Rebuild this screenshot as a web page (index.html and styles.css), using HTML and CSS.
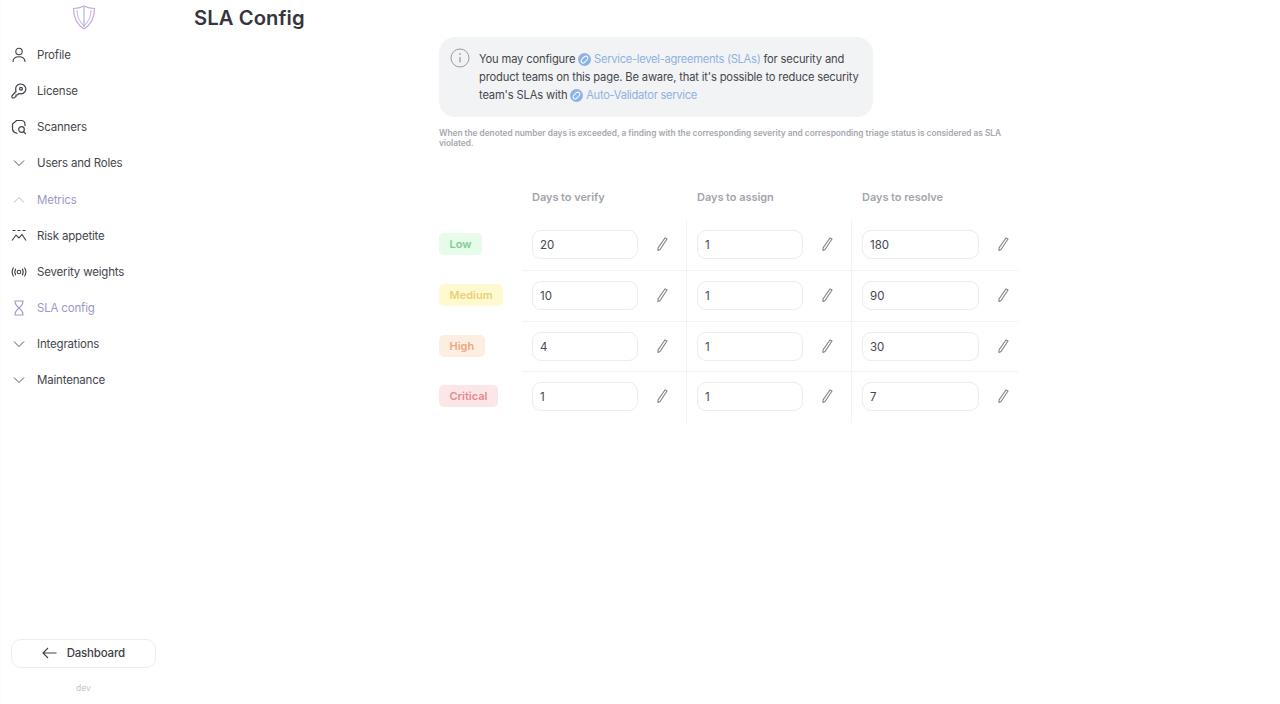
FILE: index.html
```html
<!DOCTYPE html>
<html lang="en">
<head>
<meta charset="utf-8">
<title>SLA Config</title>
<link rel="stylesheet" href="styles.css">
</head>
<body>
<div class="app">
  <aside class="sidebar">
    <div class="logo">
      <svg width="24" height="26" viewBox="0 0 24 26" fill="none" stroke="#b9a8dc" stroke-width="1.2"><path d="M12 2 C8 4 5 4.500 1.500 4.500 C1.500 13 4 20 12 25 C20 20 22.500 13 22.500 4.500 C19 4.500 16 4 12 2Z" stroke="#c4a9de"/><path d="M5 6 C5 13 7.500 18 12 22 C16.500 18 19 13 19 6" stroke="#cfc6e6"/><path d="M12 3 V23" stroke="#a9b8d8"/></svg>
    </div>
    <nav class="nav">
      <a class="nav-item"><svg class="ico" viewBox="0 0 16 16" fill="none" stroke="#3f4048" stroke-width="1.100"><circle cx="8" cy="4.500" r="3.200"/><path d="M2 15 C2 11.500 4.500 9.800 8 9.800 C11.500 9.800 14 11.500 14 15"/></svg><span>Profile</span></a>
      <a class="nav-item"><svg class="ico" viewBox="0 0 16 16" fill="none" stroke="#3f4048" stroke-width="1.200"><path d="M5.500 3 C7 1 10 .6 12.300 1.800 C14.800 3.300 15.500 6.300 14 8.700 C12.500 10.800 10 11.300 8 10.500 L6.500 12 L5 12 L5 13.500 L3 15 L1.500 15 C.8 14.500 .8 13.500 1 12.800 L5 8.500 C4.500 6.500 4.600 4.500 5.500 3Z"/><circle cx="10" cy="5.800" r="1.400"/></svg><span>License</span></a>
      <a class="nav-item"><svg class="ico" viewBox="0 0 16 16" fill="none" stroke="#3f4048" stroke-width="1.200"><path d="M6.500 14.500 C4 14 1.500 12.500 1.500 9.500 L1.500 5 L5.500 1.500 L10 1.500 C12.500 1.500 14 3 14 5.500 L14 7"/><circle cx="10.500" cy="10.500" r="2.800"/><path d="M12.500 12.700 L14.800 15"/></svg><span>Scanners</span></a>
      <a class="nav-item"><svg class="ico" viewBox="0 0 16 16" fill="none" stroke="#55565e" stroke-width="1"><path d="M3 5.500 L8 10.500 L13 5.500"/></svg><span>Users and Roles</span></a>
      <a class="nav-item is-active"><svg class="ico" viewBox="0 0 16 16" fill="none" stroke="#b6b9c6" stroke-width="1"><path d="M3 10.500 L8 5.500 L13 10.500"/></svg><span>Metrics</span></a>
      <a class="nav-item"><svg class="ico" viewBox="0 0 16 16" fill="none" stroke="#3f4048" stroke-width="1.100"><path d="M1.500 2.500 H4.500 M6.500 2.500 H9.500 M11.500 2.500 H14.500"/><path d="M1 12.500 L5 7 L8 10 L11 6.500 L15 12.500"/></svg><span>Risk appetite</span></a>
      <a class="nav-item"><svg class="ico" viewBox="0 0 16 16" fill="none" stroke="#3f4048" stroke-width="1.100"><path d="M2.500 3.500 C.8 6.300 .8 9.700 2.500 12.500"/><path d="M4.700 4.800 C3.600 6.800 3.600 9.200 4.700 11.200"/><path d="M13.500 3.500 C15.200 6.300 15.200 9.700 13.500 12.500"/><path d="M11.300 4.800 C12.400 6.800 12.400 9.200 11.300 11.200"/><circle cx="8" cy="8" r="1.800"/></svg><span>Severity weights</span></a>
      <a class="nav-item is-active"><svg class="ico" viewBox="0 0 16 16" fill="none" stroke="#9d97c9" stroke-width="1.100"><path d="M4 1 H12 C12 5 10 6.500 8 8 C10 9.500 12 11 12 15 H4 C4 11 6 9.500 8 8 C6 6.500 4 5 4 1Z"/></svg><span>SLA config</span></a>
      <a class="nav-item"><svg class="ico" viewBox="0 0 16 16" fill="none" stroke="#55565e" stroke-width="1"><path d="M3 5.500 L8 10.500 L13 5.500"/></svg><span>Integrations</span></a>
      <a class="nav-item"><svg class="ico" viewBox="0 0 16 16" fill="none" stroke="#55565e" stroke-width="1"><path d="M3 5.500 L8 10.500 L13 5.500"/></svg><span>Maintenance</span></a>
    </nav>
    <div class="side-foot">
      <a class="dash-btn"><svg width="15" height="12" viewBox="0 0 15 12" fill="none" stroke="#3f4048" stroke-width="1.100"><path d="M14.500 6 H1 M6 1 L1 6 L6 11"/></svg><span>Dashboard</span></a>
      <div class="env">dev</div>
    </div>
  </aside>
  <main class="main">
    <h1 class="title">SLA Config</h1>
    <section class="content">
      <div class="notice">
        <svg class="notice-ico" width="20" height="20" viewBox="0 0 20 20" fill="none" stroke="#9a9ca6" stroke-width="1"><circle cx="10" cy="10" r="9"/><path d="M10 9 V14.500" stroke-width="1.300"/><circle cx="10" cy="6" r=".5"/></svg>
        <p class="notice-text">You may configure <a class="link"><svg class="link-ico" width="13" height="13" viewBox="0 0 13 13"><circle cx="6.500" cy="6.500" r="6.500" fill="#8db2e6"/><g transform="rotate(-45 6.500 6.500)" fill="none" stroke="#fff" stroke-width="1"><path d="M6 4.500 H4.500 a2 2 0 0 0 0 4 H7"/><path d="M7 8.500 H8.500 a2 2 0 0 0 0 -4 H6"/></g></svg> Service-level-agreements (SLAs)</a> for security and product teams on this page. Be aware, that it's possible to reduce security team's SLAs with <a class="link"><svg class="link-ico" width="13" height="13" viewBox="0 0 13 13"><circle cx="6.500" cy="6.500" r="6.500" fill="#8db2e6"/><g transform="rotate(-45 6.500 6.500)" fill="none" stroke="#fff" stroke-width="1"><path d="M6 4.500 H4.500 a2 2 0 0 0 0 4 H7"/><path d="M7 8.500 H8.500 a2 2 0 0 0 0 -4 H6"/></g></svg> Auto-Validator service</a></p>
      </div>
      <p class="hint">When the denoted number days is exceeded, a finding with the corresponding severity and corresponding triage status is considered as SLA violated.</p>
      <div class="sla-grid">
        <div class="head"></div>
        <div class="head">Days to verify</div>
        <div class="head">Days to assign</div>
        <div class="head">Days to resolve</div>

        <div class="label"><span class="badge low">Low</span></div>
        <div class="cell"><div class="field">20</div><svg class="pen" viewBox="0 0 12 14" fill="none" stroke="#85868d" stroke-width="1.100"><path d="M9 1 L11 2 L4 12.500 L2 13.500 L2 11Z"/></svg></div>
        <div class="cell"><div class="field">1</div><svg class="pen" viewBox="0 0 12 14" fill="none" stroke="#85868d" stroke-width="1.100"><path d="M9 1 L11 2 L4 12.500 L2 13.500 L2 11Z"/></svg></div>
        <div class="cell wide"><div class="field">180</div><svg class="pen" viewBox="0 0 12 14" fill="none" stroke="#85868d" stroke-width="1.100"><path d="M9 1 L11 2 L4 12.500 L2 13.500 L2 11Z"/></svg></div>

        <div class="label"><span class="badge medium">Medium</span></div>
        <div class="cell"><div class="field">10</div><svg class="pen" viewBox="0 0 12 14" fill="none" stroke="#85868d" stroke-width="1.100"><path d="M9 1 L11 2 L4 12.500 L2 13.500 L2 11Z"/></svg></div>
        <div class="cell"><div class="field">1</div><svg class="pen" viewBox="0 0 12 14" fill="none" stroke="#85868d" stroke-width="1.100"><path d="M9 1 L11 2 L4 12.500 L2 13.500 L2 11Z"/></svg></div>
        <div class="cell wide"><div class="field">90</div><svg class="pen" viewBox="0 0 12 14" fill="none" stroke="#85868d" stroke-width="1.100"><path d="M9 1 L11 2 L4 12.500 L2 13.500 L2 11Z"/></svg></div>

        <div class="label"><span class="badge high">High</span></div>
        <div class="cell"><div class="field">4</div><svg class="pen" viewBox="0 0 12 14" fill="none" stroke="#85868d" stroke-width="1.100"><path d="M9 1 L11 2 L4 12.500 L2 13.500 L2 11Z"/></svg></div>
        <div class="cell"><div class="field">1</div><svg class="pen" viewBox="0 0 12 14" fill="none" stroke="#85868d" stroke-width="1.100"><path d="M9 1 L11 2 L4 12.500 L2 13.500 L2 11Z"/></svg></div>
        <div class="cell wide"><div class="field">30</div><svg class="pen" viewBox="0 0 12 14" fill="none" stroke="#85868d" stroke-width="1.100"><path d="M9 1 L11 2 L4 12.500 L2 13.500 L2 11Z"/></svg></div>

        <div class="label last"><span class="badge critical">Critical</span></div>
        <div class="cell last"><div class="field">1</div><svg class="pen" viewBox="0 0 12 14" fill="none" stroke="#85868d" stroke-width="1.100"><path d="M9 1 L11 2 L4 12.500 L2 13.500 L2 11Z"/></svg></div>
        <div class="cell last"><div class="field">1</div><svg class="pen" viewBox="0 0 12 14" fill="none" stroke="#85868d" stroke-width="1.100"><path d="M9 1 L11 2 L4 12.500 L2 13.500 L2 11Z"/></svg></div>
        <div class="cell wide last"><div class="field">7</div><svg class="pen" viewBox="0 0 12 14" fill="none" stroke="#85868d" stroke-width="1.100"><path d="M9 1 L11 2 L4 12.500 L2 13.500 L2 11Z"/></svg></div>
      </div>
    </section>
  </main>
</div>
</body>
</html>
```
FILE: styles.css
```css
* { box-sizing: border-box; }
html, body { margin: 0; height: 100%; }
body { font-family: Inter, "Open Sans", sans-serif; background: #fff; color: #3f4048; overflow: hidden; }
.app { display: flex; height: 704px; }
.sidebar { width: 167px; flex: none; display: flex; flex-direction: column; padding: 0 11px; box-shadow: inset 1px 0 0 #fbfbfb; }
.logo { height: 37px; display: flex; justify-content: center; align-items: flex-start; padding-top: 4px; }
.nav { display: flex; flex-direction: column; }
.nav-item { height: 36.15px; display: flex; align-items: center; gap: 10px; font-size: 11.500px; font-weight: 400; letter-spacing: -.18px; color: #45464e; }
.nav-item.is-active { color: #9d97c9; }
.ico { width: 16px; height: 16px; flex: none; }
.side-foot { margin-top: auto; padding-bottom: 10px; display: flex; flex-direction: column; align-items: center; }
.dash-btn { width: 145px; height: 29px; border: 1px solid #ececee; border-radius: 10px; display: flex; align-items: center; justify-content: center; gap: 9.500px; padding-bottom: 1px; font-size: 11.500px; font-weight: 500; letter-spacing: -.2px; color: #3f4048; }
.env { margin-top: 14px; font-size: 8.500px; color: #c4c5ca; line-height: 12px; }
.main { flex: 1; min-width: 0; padding-left: 27px; }
.title { margin: 3.500px 0 0; font-size: 20.200px; line-height: 27px; font-weight: 600; letter-spacing: .1px; color: #35363d; }
.content { margin: 6.500px 0 0 245px; width: 580px; }
.notice { width: 434px; height: 80px; background: #f2f3f5; border-radius: 16px; padding: 11px 10px 0 11px; display: flex; gap: 9px; }
.notice-ico { flex: none; }
.notice-text { margin: 2px 0 0; font-size: 11.200px; line-height: 18px; letter-spacing: -.17px; color: #45464e; font-weight: 400; }
.link { color: #8fb1e2; letter-spacing: -.3px; }
.link-ico { vertical-align: -2.500px; }
.hint { margin: 11px 0 0; width: 580px; font-size: 8.300px; line-height: 10px; font-weight: 600; color: #a5a7b0; letter-spacing: -.01px; }
.sla-grid { margin-top: 38px; width: 579px; display: grid; grid-template-columns: 83px 165px 165px 166px; }
.head { height: 34px; font-size: 11px; font-weight: 600; color: #a3a5ae; letter-spacing: -.05px; padding: 3px 0 0 10px; line-height: 16px; }
.head:first-child { padding: 0; }
.label { height: 50.8px; display: flex; align-items: center; padding-bottom: 2px; }
.label.last { height: 51px; padding-bottom: 3px; }
.cell { height: 50.8px; display: flex; align-items: center; padding-left: 10px; border-bottom: 1px solid #f3f3f5; border-right: 1px solid #f3f3f5; }
.cell.last { height: 51px; border-bottom: 0; padding-bottom: 2px; }
.cell.wide { border-right: 0; }
.field { width: 106px; height: 29px; border: 1px solid #ececee; border-radius: 9px; font-size: 11.500px; line-height: 28px; padding-left: 7px; color: #45464e; }
.wide .field { width: 117px; }
.pen { width: 12px; height: 14px; margin: 0 0 1px 18px; flex: none; }
.badge { display: inline-block; height: 22px; line-height: 22px; padding: 0 10.500px; border-radius: 5px; font-size: 11px; font-weight: 600; }
.low { background: #e6fbe9; color: #82cc93; }
.medium { background: #fff9cf; color: #e9d27a; }
.high { background: #fdeee2; color: #ecaa80; }
.critical { background: #fde6e8; color: #e58a90; }
```
